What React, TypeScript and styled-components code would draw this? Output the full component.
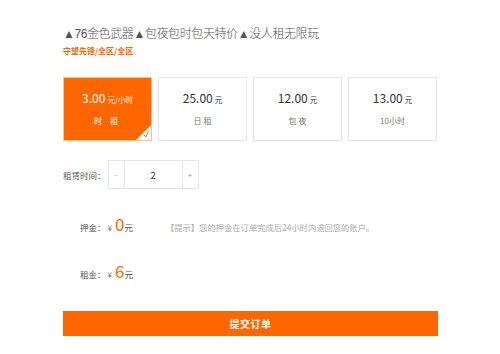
import React, { ReactElement, useState } from 'react';
import styled, { createGlobalStyle } from 'styled-components';

const Global = createGlobalStyle`
  body {
    margin: 0;
    background: #fff;
    font-family: "Noto Sans CJK SC", "Noto Sans", sans-serif;
  }
`;

const ORANGE = '#ff6600';

const Page = styled.div`
  width: 375px;
  padding: 26px 0 0 63px;
`;
const Title = styled.h1`
  margin: 0;
  font-family: "Liberation Sans", "DejaVu Sans", "Noto Sans CJK SC", sans-serif;
  font-size: 12px;
  font-weight: 300;
  line-height: 16px;
  letter-spacing: -0.4px;
  color: #555;
`;
const Sub = styled.div`
  margin-top: 3px;
  font-size: 8px;
  font-weight: 700;
  line-height: 12px;
  color: ${ORANGE};
`;
const Cards = styled.div`
  display: flex;
  gap: 6px;
  margin-top: 20px;
`;
const Card = styled.div<{ $active?: boolean }>`
  position: relative;
  box-sizing: border-box;
  width: 89px;
  height: 64px;
  display: flex;
  flex-direction: column;
  align-items: center;
  justify-content: center;
  gap: 8px;
  border: 1px solid ${(p) => (p.$active ? '#ffc38f' : '#e6e6e6')};
  background: ${(p) => (p.$active ? ORANGE : '#fff')};
  color: ${(p) => (p.$active ? '#fff' : '#333')};
  cursor: pointer;
`;
const Price = styled.div`
  font-size: 12px;
  line-height: 14px;
`;
const Unit = styled.span`
  font-size: 7.5px;
  margin-left: 2px;
`;
const Label = styled.div<{ $active?: boolean }>`
  font-size: 8px;
  line-height: 12px;
  letter-spacing: ${(p) => (p.$active ? '3px' : '0')};
  color: ${(p) => (p.$active ? '#fff' : '#777')};
`;
const Corner = styled.svg`
  position: absolute;
  right: 0;
  bottom: 0;
`;
const RentRow = styled.div`
  display: flex;
  align-items: center;
  margin-top: 19px;
  height: 29px;
`;
const RowLabel = styled.span`
  font-size: 8.5px;
  color: #555;
`;
const Stepper = styled.div`
  display: flex;
  margin-left: 2px;
  height: 29px;
  border: 1px solid #e6e6e6;
  box-sizing: border-box;
`;
const StepBtn = styled.button`
  width: 15px;
  border: none;
  background: #fff;
  padding: 0;
  font-size: 8px;
  color: #999;
  font-family: inherit;
`;
const StepValue = styled.div`
  width: 57px;
  display: flex;
  align-items: center;
  justify-content: center;
  border-left: 1px solid #e6e6e6;
  border-right: 1px solid #e6e6e6;
  font-size: 9.5px;
  color: #333;
`;
const MoneyRow = styled.div<{ $gap: number }>`
  display: flex;
  align-items: baseline;
  margin-top: ${(p) => p.$gap}px;
  padding-left: 17px;
  height: 22px;
`;
const MoneyLabel = styled.span`
  font-size: 8.5px;
  color: #555;
`;
const Yen = styled.span`
  font-size: 8px;
  color: #777;
  margin: 0 3px 0 2px;
`;
const Amount = styled.span`
  font-size: 17px;
  color: ${ORANGE};
  line-height: 22px;
`;
const Yuan = styled.span`
  font-size: 8.5px;
  color: #555;
`;
const Tip = styled.span`
  margin-left: 33px;
  font-size: 8.3px;
  color: #aaa;
`;
const Submit = styled.button`
  display: block;
  width: 375px;
  height: 25px;
  margin-top: 29px;
  border: none;
  background: ${ORANGE};
  color: #fff;
  font-family: inherit;
  font-size: 10px;
  font-weight: 700;
  letter-spacing: 0.5px;
`;

const options = [
  { price: '3.00', unit: '元/小时', label: '时 租' },
  { price: '25.00', unit: '元', label: '日 租' },
  { price: '12.00', unit: '元', label: '包 夜' },
  { price: '13.00', unit: '元', label: '10小时' },
];

export default function App(): ReactElement {
  const [sel, setSel] = useState(0);
  const [hours, setHours] = useState(2);

  return (
    <Page>
      <Global />
      <Title>▲76金色武器▲包夜包时包天特价▲没人租无限玩</Title>
      <Sub>守望先锋/全区/全区</Sub>
      <Cards>
        {options.map((o, i) => (
          <Card key={i} $active={sel === i} onClick={() => setSel(i)}>
            <Price>
              {o.price}
              <Unit>{o.unit}</Unit>
            </Price>
            <Label $active={sel === i}>{o.label}</Label>
            {sel === i && (
              <Corner width="15" height="15" viewBox="0 0 15 15">
                <polygon points="15,0 15,15 0,15" fill="#fff" />
                <path d="M8 9.5 L9.8 12 L12.5 6.5" fill="none" stroke={ORANGE} strokeWidth="0.9" />
              </Corner>
            )}
          </Card>
        ))}
      </Cards>
      <RentRow>
        <RowLabel>租赁时间：</RowLabel>
        <Stepper>
          <StepBtn onClick={() => setHours(Math.max(1, hours - 1))}>-</StepBtn>
          <StepValue>{hours}</StepValue>
          <StepBtn onClick={() => setHours(hours + 1)}>+</StepBtn>
        </Stepper>
      </RentRow>
      <MoneyRow $gap={24}>
        <MoneyLabel>押金：</MoneyLabel>
        <Yen>¥</Yen>
        <Amount>0</Amount>
        <Yuan>元</Yuan>
        <Tip>【提示】您的押金在订单完成后24小时内退回您的账户。</Tip>
      </MoneyRow>
      <MoneyRow $gap={25}>
        <MoneyLabel>租金：</MoneyLabel>
        <Yen>¥</Yen>
        <Amount>{3 * hours}</Amount>
        <Yuan>元</Yuan>
      </MoneyRow>
      <Submit>提交订单</Submit>
    </Page>
  );
}
